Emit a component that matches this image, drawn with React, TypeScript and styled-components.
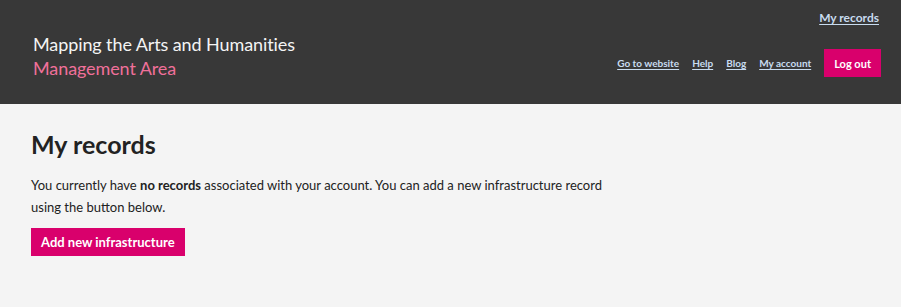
import React from "react";
import styled, { createGlobalStyle } from "styled-components";

const Global = createGlobalStyle`
  html, body { margin: 0; padding: 0; }
  body {
    background: #f4f4f4;
    font-family: Lato, "Open Sans", "Liberation Sans", sans-serif;
    color: #222;
  }
`;

const Header = styled.header`
  background: #383838;
  height: 104px;
  display: flex;
  justify-content: space-between;
  align-items: stretch;
  padding: 0 20px 0 33px;
  box-sizing: border-box;
`;

const Brand = styled.div`
  display: flex;
  flex-direction: column;
  justify-content: center;
  padding-top: 8px;
`;

const BrandLine = styled.div<{ $accent?: boolean }>`
  font-size: 18px;
  line-height: 24px;
  color: ${(p) => (p.$accent ? "#f0709a" : "#f4f4f4")};
  letter-spacing: -0.1px;
`;

const Side = styled.div`
  display: flex;
  flex-direction: column;
  align-items: flex-end;
  padding-top: 10px;
`;

const TopLink = styled.a`
  color: #c8dcf0;
  font-weight: 700;
  font-size: 12px;
  line-height: 15px;
  margin-right: 2px;
  text-decoration: underline;
  text-underline-offset: 2px;
  cursor: pointer;
`;

const NavLink = styled.a`
  color: #c8dcf0;
  font-weight: 700;
  font-size: 10px;
  line-height: 15px;
  text-decoration: underline;
  text-underline-offset: 2px;
  cursor: pointer;
`;

const NavRow = styled.nav`
  display: flex;
  align-items: center;
  gap: 13px;
  margin-top: 24px;
`;

const PinkButton = styled.button<{ $size?: number; $pad?: number }>`
  background: #d9006c;
  color: #fff;
  border: 0;
  font-family: inherit;
  font-weight: 700;
  font-size: ${(p) => p.$size ?? 11}px;
  height: 28px;
  padding: 0 ${(p) => p.$pad ?? 11}px;
  cursor: pointer;
`;

const Main = styled.main`
  padding: 24px 31px;
`;

const Heading = styled.h1`
  margin: 0;
  font-size: 25px;
  line-height: 32px;
  font-weight: 700;
  color: #222;
`;

const Text = styled.p`
  margin: 14px 0 10px;
  font-size: 13px;
  line-height: 22px;
  max-width: 590px;
  color: #222;
`;

export default function App() {
  return (
    <>
      <Global />
      <Header>
        <Brand>
          <BrandLine>Mapping the Arts and Humanities</BrandLine>
          <BrandLine $accent>Management Area</BrandLine>
        </Brand>
        <Side>
          <TopLink>My records</TopLink>
          <NavRow>
            <NavLink>Go to website</NavLink>
            <NavLink>Help</NavLink>
            <NavLink>Blog</NavLink>
            <NavLink>My account</NavLink>
            <PinkButton $pad={10}>Log out</PinkButton>
          </NavRow>
        </Side>
      </Header>
      <Main>
        <Heading>My records</Heading>
        <Text>
          You currently have <b>no records</b> associated with your account. You can add a new
          infrastructure record using the button below.
        </Text>
        <PinkButton $size={13} $pad={10}>Add new infrastructure</PinkButton>
      </Main>
    </>
  );
}
